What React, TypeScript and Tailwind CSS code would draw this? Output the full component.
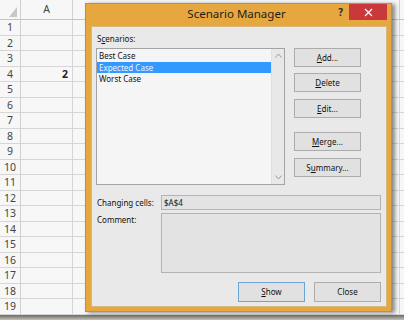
import React from "react";

const rows = Array.from({ length: 19 }, (_, i) => i + 1);

function Btn({ children, w = "w-[67px]", h = "h-[19px]", def = false }: { children: React.ReactNode; w?: string; h?: string; def?: boolean }) {
  return (
    <div
      className={`${w} ${h} flex items-center justify-center text-[8px] text-[#111] bg-[#e1e1e1] border ${
        def ? "border-[#6ea3d6]" : "border-[#acacac]"
      }`}
    >
      {children}
    </div>
  );
}

export default function App() {
  return (
    <div
      className="relative w-[404px] h-[320px] overflow-hidden bg-[#f7f7f7] flex flex-col"
      style={{ fontFamily: '"Noto Sans", "Open Sans", sans-serif' }}
    >
      {/* Sheet header */}
      <div className="flex h-[20px] border-b border-[#c4c4c4] shrink-0">
        <div className="w-[21px] border-r border-[#d0d0d0] flex items-end justify-end pr-[3px] pb-[2px]">
          <svg width="8" height="10" viewBox="0 0 8 10">
            <polygon points="8,0 8,10 0,10" fill="#c8c8c8" />
          </svg>
        </div>
        <div className="w-[52px] border-r border-[#d0d0d0] flex items-center justify-center text-[10.5px] text-[#444]">
          A
        </div>
        <div className="w-[327px] border-r border-[#d0d0d0]" />
      </div>
      {rows.map((r) => (
        <div key={r} className="flex h-[15.5px] border-b border-[#d6d6d6] shrink-0">
          <div className="w-[21px] border-r border-[#d0d0d0] flex items-center justify-center text-[10.5px] text-[#444] leading-none">
            {r}
          </div>
          <div className="w-[52px] border-r border-[#d6d6d6] flex items-center justify-end pr-[4px] text-[10.5px] font-bold text-[#222] leading-none">
            {r === 4 ? "2" : ""}
          </div>
          <div className="w-[327px] border-r border-[#d6d6d6]" />
        </div>
      ))}
      <div className="flex-1 bg-gradient-to-b from-[#6e6c62] to-[#c4c2b8]" />

      {/* Dialog */}
      <div className="absolute left-[85px] top-[3px] w-[307px] h-[309px] bg-[#e6a73e] border border-[#c88d2c] flex flex-col shadow-[3px_1px_4px_rgba(0,0,0,0.45)]">
        <div className="h-[22px] shrink-0 grid grid-cols-[1fr_auto_1fr] items-start pr-[4px]">
          <div />
          <div className="pt-[3px] text-[11.5px] leading-[14px] text-[#1e1e1e]">Scenario Manager</div>
          <div className="flex justify-end items-start">
            <div className="mr-[6px] pt-[1px] text-[10px] font-bold text-[#2a2a2a] leading-[14px]">?</div>
            <div className="w-[38px] h-[16px] bg-[#c9383a] flex items-center justify-center">
              <svg width="9" height="9" viewBox="0 0 9 9">
                <path d="M1 1 L8 8 M8 1 L1 8" stroke="#ffffff" strokeWidth="1.2" />
              </svg>
            </div>
          </div>
        </div>

        <div className="flex-1 ml-[5px] mr-[4px] mb-[4px] bg-[#e9e9e9] border border-[#d9b87e] flex flex-col pl-[4px] pr-[5px] text-[8px] text-[#111]">
          <div className="flex">
            <div className="flex flex-col">
              <div className="pt-[6px] h-[18px] leading-[12px] pl-[1px]">
                S<span className="underline">c</span>enarios:
              </div>
              <div className="mt-[3px] w-[189px] h-[137px] border border-[#a3a3a3] bg-[#f5f5f5] flex">
                <div className="flex-1 flex flex-col pt-[1px]">
                  <div className="h-[11.5px] leading-[11.5px] pl-[2px]">Best Case</div>
                  <div className="h-[11.5px] leading-[11.5px] pl-[2px] bg-[#3399ff] text-[#eaf3ff]">Expected Case</div>
                  <div className="h-[11.5px] leading-[11.5px] pl-[2px]">Worst Case</div>
                </div>
                <div className="w-[13px] bg-[#e8e8e8] border-l border-[#e0e0e0] flex flex-col items-center justify-between py-[4px]">
                  <svg width="7" height="5" viewBox="0 0 7 5">
                    <path d="M0.5 4.5 L3.5 1 L6.5 4.5" stroke="#9a9a9a" strokeWidth="1" fill="none" />
                  </svg>
                  <svg width="7" height="5" viewBox="0 0 7 5">
                    <path d="M0.5 0.5 L3.5 4 L6.5 0.5" stroke="#9a9a9a" strokeWidth="1" fill="none" />
                  </svg>
                </div>
              </div>
            </div>
            <div className="ml-[9px] pt-[21px] flex flex-col">
              <Btn>
                <span className="underline">A</span>dd...
              </Btn>
              <div className="mt-[6px]">
                <Btn>
                  <span className="underline">D</span>elete
                </Btn>
              </div>
              <div className="mt-[7px]">
                <Btn>
                  <span className="underline">E</span>dit...
                </Btn>
              </div>
              <div className="mt-[14px]">
                <Btn>
                  <span className="underline">M</span>erge...
                </Btn>
              </div>
              <div className="mt-[7px]">
                <Btn>
                  S<span className="underline">u</span>mmary...
                </Btn>
              </div>
            </div>
          </div>

          <div className="mt-[10px] flex h-[15px] items-center">
            <div className="w-[65px] pl-[1px]">Changing cells:</div>
            <div className="flex-1 h-[15px] border border-[#b4b4b4] bg-[#e3e3e3] flex items-center pl-[2px]">$A$4</div>
          </div>
          <div className="mt-[3px] flex h-[60px]">
            <div className="w-[65px] pl-[1px] pt-[1px]">Comment:</div>
            <div className="flex-1 border border-[#b4b4b4] bg-[#e3e3e3]" />
          </div>

          <div className="mt-[9px] flex justify-end gap-[9px]">
            <Btn h="h-[20px]" def>
              <span className="underline">S</span>how
            </Btn>
            <Btn h="h-[20px]">Close</Btn>
          </div>
        </div>
      </div>
    </div>
  );
}
